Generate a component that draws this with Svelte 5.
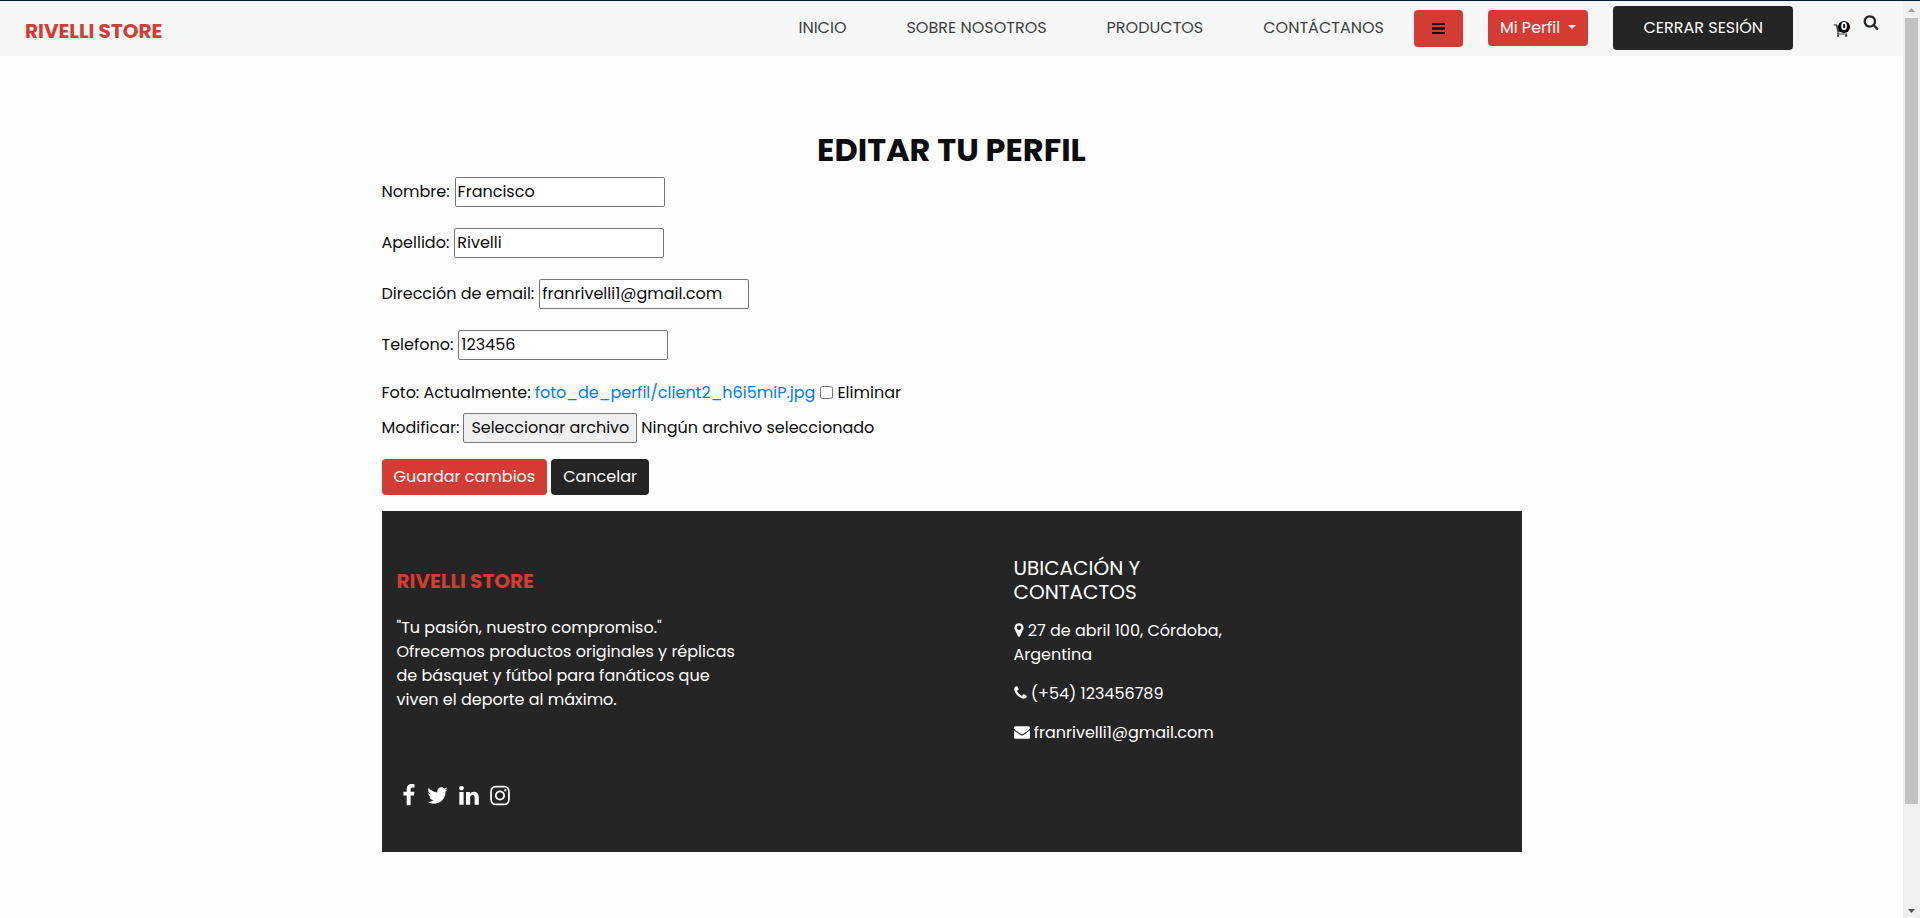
<script>
  const links = ['INICIO', 'SOBRE NOSOTROS', 'PRODUCTOS', 'CONTÁCTANOS'];

  let fields = $state([
    { id: 'nombre', label: 'Nombre:', type: 'text', value: 'Francisco' },
    { id: 'apellido', label: 'Apellido:', type: 'text', value: 'Rivelli' },
    { id: 'email', label: 'Dirección de email:', type: 'email', value: 'franrivelli1@gmail.com' },
    { id: 'telefono', label: 'Telefono:', type: 'text', value: '123456' }
  ]);

  const social = [
    {
      name: 'Facebook',
      box: '-100 0 1792 1792',
      path: 'M1343 12v264h-157q-86 0-116 36t-30 108v189h293l-39 296h-254v759h-306v-759h-255v-296h255v-218q0-186 104-288.500t277-102.500q147 0 228 12z'
    },
    {
      name: 'Twitter',
      box: '80 0 1792 1792',
      path: 'M1684 408q-67 98-162 167 1 14 1 42 0 130-38 259.500t-115.500 248.500-184.500 210.500-258 146-323 54.500q-271 0-496-145 35 4 78 4 225 0 401-138-105-2-188-64.500t-114-159.500q33 5 61 5 43 0 85-11-112-23-185.500-111.500t-73.500-205.500v-4q68 38 146 41-66-44-105-115t-39-154q0-88 44-163 121 149 294.500 238.500t371.500 99.500q-8-38-8-74 0-134 94.500-228.500t228.500-94.500q140 0 236 102 109-21 205-78-37 115-142 178 93-10 186-50z'
    },
    {
      name: 'LinkedIn',
      box: '40 0 1792 1792',
      path: 'M477 625v991h-330v-991h330zm21-306q1 73-50.500 122t-135.500 49h-2q-82 0-132-49t-50-122q0-74 51.500-122.500t134.500-48.500 133 48.500 51 122.500zm1166 729v568h-329v-530q0-105-40.500-164.500t-126.500-59.500q-63 0-105.500 34.500t-63.500 85.500q-11 30-11 81v553h-329q2-399 2-647t-1-296l-1-48h329v144h-2q20-32 41-56t56.500-52 87-43.500 114.500-15.500q171 0 275 113.500t104 332.500z'
    },
    {
      name: 'Instagram',
      box: '40 0 1792 1792',
      path: 'M1152 896q0-106-75-181t-181-75-181 75-75 181 75 181 181 75 181-75 75-181zm138 0q0 164-115 279t-279 115-279-115-115-279 115-279 279-115 279 115 115 279zm108-410q0 38-27 65t-65 27-65-27-27-65 27-65 65-27 65 27 27 65zm-502-220q-7 0-76.500-.5t-105.500 0-96.500 3-103 10-71.500 18.500q-50 20-88 58t-58 88q-11 29-18.500 71.500t-10 103-3 96.500 0 105.500.5 76.500-.5 76.500 0 105.500 3 96.500 10 103 18.500 71.500q20 50 58 88t88 58q29 11 71.500 18.500t103 10 96.500 3 105.500 0 76.500-.5 76.500.5 105.500 0 96.500-3 103-10 71.500-18.500q50-20 88-58t58-88q11-29 18.500-71.500t10-103 3-96.500 0-105.500-.5-76.500.5-76.500 0-105.500-3-96.500-10-103-18.500-71.500q-20-50-58-88t-88-58q-29-11-71.500-18.500t-103-10-96.500-3-105.500 0-76.500.5zm768 630q0 229-5 317-10 208-124 322t-322 124q-88 5-317 5t-317-5q-208-10-322-124t-124-322q-5-88-5-317t5-317q10-208 124-322t322-124q88-5 317-5t317 5q208 10 322 124t124 322q5 88 5 317z'
    }
  ];
</script>

<div class="window">
  <div class="page">
    <header>
      <a class="brand" href="#inicio">RIVELLI STORE</a>
      <nav>
        {#each links as link}
          <a class="nav-link" href="#{link}">{link}</a>
        {/each}
      </nav>
      <div class="actions">
        <button class="btn red menu" aria-label="Menú">
          <svg width="13" height="11" viewBox="0 0 13 11"><path d="M0 0h13v2H0zM0 4.300h13v2.400H0zM0 9h13v2H0z" /></svg>
        </button>
        <button class="btn red">Mi Perfil <span class="caret"></span></button>
        <button class="btn dark logout">CERRAR SESIÓN</button>
      </div>
      <div class="tools">
        <a class="cart" href="#carrito" aria-label="Carrito">
          <svg width="16" height="16" viewBox="0 0 1792 1792"><path d="M704 1536q0 52-38 90t-90 38-90-38-38-90 38-90 90-38 90 38 38 90zm896 0q0 52-38 90t-90 38-90-38-38-90 38-90 90-38 90 38 38 90zm128-1088v512q0 24-16.500 42.500t-40.500 21.500l-1044 122q13 60 13 70 0 16-24 64h920q26 0 45 19t19 45-19 45-45 19h-1024q-26 0-45-19t-19-45q0-11 8-31.500t16-36 21.500-40 15.500-29.500l-177-823h-204q-26 0-45-19t-19-45 19-45 45-19h256q16 0 28.500 6.500t19.500 15.500 13 24.500 8 26 5.500 29.500 4.500 26h1201q26 0 45 19t19 45z" /></svg>
          <span class="badge">0</span>
        </a>
        <button class="search" aria-label="Buscar">
          <svg width="16" height="16" viewBox="0 0 1792 1792"><path d="M1216 832q0-185-131.500-316.500t-316.500-131.500-316.500 131.500-131.500 316.500 131.500 316.500 316.500 131.500 316.500-131.500 131.500-316.500zm512 832q0 52-38 90t-90 38q-54 0-90-38l-343-342q-179 124-399 124-143 0-273.500-55.500t-225-150-150-225-55.500-273.500 55.500-273.500 150-225 225-150 273.500-55.500 273.500 55.500 225 150 150 225 55.500 273.500q0 220-124 399l343 343q37 37 37 90z" /></svg>
        </button>
      </div>
    </header>

    <main>
      <h1>EDITAR TU PERFIL</h1>
      <form onsubmit={(e) => e.preventDefault()}>
        {#each fields as field}
          <div class="field">
            <label for={field.id}>{field.label}</label>
            <input id={field.id} type={field.type} bind:value={field.value} />
          </div>
        {/each}
        <div class="row photo">
          <span>Foto: Actualmente:</span>
          <a href="#foto">foto_de_perfil/client2_h6i5miP.jpg</a>
          <input id="eliminar" type="checkbox" />
          <label for="eliminar">Eliminar</label>
        </div>
        <div class="row">
          <span>Modificar:</span>
          <input id="foto" class="hidden" type="file" />
          <label class="pick" for="foto">Seleccionar archivo</label>
          <span>Ningún archivo seleccionado</span>
        </div>
        <div class="row submit">
          <button class="btn red" type="submit">Guardar cambios</button>
          <a class="btn dark" href="#perfil">Cancelar</a>
        </div>
      </form>

      <footer>
        <section class="about">
          <a class="brand" href="#inicio">RIVELLI STORE</a>
          <p>"Tu pasión, nuestro compromiso."<br />Ofrecemos productos originales y réplicas<br />de básquet y fútbol para fanáticos que<br />viven el deporte al máximo.</p>
          <div class="social">
            {#each social as item}
              <a href="#{item.name}" aria-label={item.name}>
                <svg width="23" height="23" viewBox={item.box}><path d={item.path} /></svg>
              </a>
            {/each}
          </div>
        </section>
        <section class="contact">
          <h2>UBICACIÓN Y<br />CONTACTOS</h2>
          <p>
            <svg width="10" height="16" viewBox="384 0 1024 1792"><path d="M1152 640q0-106-75-181t-181-75-181 75-75 181 75 181 181 75 181-75 75-181zm256 0q0 109-33 179l-364 774q-16 33-47.500 52t-67.500 19-67.500-19-46.500-52l-365-774q-33-70-33-179 0-212 150-362t362-150 362 150 150 362z" /></svg>
            27 de abril 100, Córdoba,<br />Argentina
          </p>
          <p>
            <svg width="13" height="16" viewBox="192 0 1408 1792"><path d="M1600 1240q0 27-10 70.500t-21 68.500q-21 50-122 106-94 51-186 51-27 0-53-3.500t-57.500-12.500-47-14.500-55.500-20.500-49-18q-98-35-175-83-127-79-264-216t-216-264q-48-77-83-175-3-9-18-49t-20.500-55.500-14.500-47-12.500-57.500-3.500-53q0-92 51-186 56-101 106-122 25-11 68.500-21t70.500-10q14 0 21 3 18 6 53 76 11 19 30 54t35 63.500 31 53.500q3 4 17.500 25t21.500 35.500 7 28.500q0 20-28.500 50t-62 55-62 53-28.500 46q0 9 5 22.500t8.500 20.500 14 24 11.500 19q76 137 174 235t235 174q2 1 19 11.500t24 14 20.500 8.500 22.500 5q18 0 46-28.500t53-62 55-62 50-28.500q14 0 28.500 7t35.500 21.500 25 17.500q25 15 53.500 31t63.500 35 54 30q70 35 76 53 3 7 3 21z" /></svg>
            (+54) 123456789
          </p>
          <p>
            <svg width="16" height="16" viewBox="0 0 1792 1792"><path d="M1792 710v794q0 66-47 113t-113 47h-1472q-66 0-113-47t-47-113v-794q44 49 101 87 362 246 497 345 57 42 92.500 65.500t94.500 48 110 24.500h2q51 0 110-24.500t94.500-48 92.500-65.500q170-123 498-345 57-39 100-87zm0-294q0 79-49 151t-122 123q-376 261-468 325-10 7-42.500 31t-54 38.500-52 32.500-57.500 27-50 9h-2q-23 0-50-9t-57.500-27-52-32.500-54-38.500-42.500-31q-91-64-262-182.500t-205-142.500q-62-42-117-115.500t-55-136.500q0-78 41.500-130t118.500-52h1472q65 0 112.500 47t47.500 113z" /></svg>
            franrivelli1@gmail.com
          </p>
        </section>
      </footer>
    </main>
  </div>
  <div class="scrollbar" aria-hidden="true">
    <svg width="17" height="17" viewBox="0 0 17 17"><path fill="#a3a3a3" d="M5 11h7L8.500 7z" /></svg>
    <div class="track"><div class="thumb"></div></div>
    <svg width="17" height="17" viewBox="0 0 17 17"><path fill="#505050" d="M5 8h7l-3.500 4z" /></svg>
  </div>
</div>

<style>
  :global(body) {
    margin: 0;
    background: #fefefe;
  }
  .window {
    display: grid;
    grid-template-columns: minmax(0, 1fr) 17px;
    min-height: 100vh;
    box-sizing: border-box;
    border-top: 1px solid #051c33;
    font: 16px/24px Poppins, Inter, sans-serif;
    color: #0c0c0c;
  }
  a {
    color: inherit;
    text-decoration: none;
  }
  svg {
    fill: currentColor;
  }
  button,
  input {
    font: inherit;
    color: inherit;
  }
  header {
    display: flex;
    height: 55px;
    background: #f5f7f7;
  }
  .brand {
    font-size: 20px;
    font-weight: 700;
    color: #d43c33;
  }
  header .brand {
    margin: 18px auto 0 25px;
  }
  nav {
    display: flex;
    padding-top: 15px;
  }
  .nav-link {
    padding: 0 30px;
    color: #403f3f;
  }
  .actions {
    display: flex;
    align-items: flex-start;
    gap: 25px;
    padding-top: 9px;
  }
  .btn {
    display: inline-block;
    box-sizing: border-box;
    height: 36px;
    padding: 6px 12px;
    border: 0;
    border-radius: 4px;
    color: #fff;
    cursor: pointer;
  }
  .red {
    background: #d43c33;
  }
  .dark {
    background: #252525;
  }
  .menu {
    width: 49px;
    height: 37px;
    color: #0c0c0c;
  }
  .menu svg {
    display: block;
    margin: 0 auto;
  }
  .caret {
    display: inline-block;
    margin-left: 4px;
    vertical-align: 4px;
    border: 4px solid transparent;
    border-top-color: #fff;
    border-bottom: 0;
  }
  .logout {
    height: 44px;
    margin-top: -4px;
    padding: 0 30px;
  }
  .tools {
    display: flex;
    align-items: flex-start;
    gap: 14px;
    padding: 13px 24px 0 40px;
  }
  .cart {
    position: relative;
    display: flex;
    padding-top: 8px;
    color: #403f3f;
  }
  .badge {
    position: absolute;
    top: 7px;
    left: 5px;
    width: 12px;
    height: 12px;
    border-radius: 50%;
    background: #000;
    color: #fff;
    font-size: 10px;
    font-weight: 700;
    line-height: 12px;
    text-align: center;
  }
  .search {
    display: flex;
    padding: 0;
    border: 0;
    background: none;
    color: #212529;
  }
  main {
    max-width: 1140px;
    margin: 0 auto;
    padding-top: 75px;
  }
  h1 {
    margin: 0 0 8px;
    font-size: 32px;
    line-height: 38px;
    font-weight: 700;
    text-align: center;
  }
  .field {
    display: flex;
    align-items: center;
    gap: 5px;
    margin-bottom: 21px;
  }
  .field input {
    box-sizing: border-box;
    width: 210px;
    height: 30px;
    padding: 0 2px 1px;
    border: 1px solid #767676;
    border-radius: 2px;
    background: #fff;
  }
  .row {
    display: flex;
    align-items: center;
    gap: 4px;
  }
  .photo {
    margin-bottom: 8px;
  }
  .photo a {
    color: #007bff;
  }
  .photo input {
    width: 13px;
    height: 13px;
    margin: 0 0 2px 1px;
  }
  .hidden {
    position: absolute;
    width: 1px;
    height: 1px;
    overflow: hidden;
    opacity: 0;
  }
  .pick {
    padding: 2px 7px;
    border: 1px solid #767676;
    border-radius: 2px;
    background: #efefef;
  }
  .submit {
    margin: 16px 0;
  }
  footer {
    display: grid;
    grid-template-columns: 617px 1fr;
    box-sizing: border-box;
    padding: 45px 15px;
    background: #252525;
    color: #fff;
  }
  .about .brand {
    display: block;
    margin: 13px 0 23px;
  }
  footer p {
    margin: 0 0 15px;
  }
  .social {
    display: flex;
    gap: 8px;
    margin: 72px 0 0 -1px;
  }
  .social svg {
    display: block;
  }
  .contact h2 {
    margin: 0 0 15px;
    font-size: 20px;
    line-height: 24px;
    font-weight: 400;
  }
  .contact svg {
    vertical-align: -2px;
  }
  .scrollbar {
    display: flex;
    flex-direction: column;
    background: #f0f0f0;
  }
  .scrollbar svg {
    display: block;
  }
  .track {
    flex: 1;
    padding: 0 2px;
  }
  .thumb {
    height: 89%;
    background: #c1c1c1;
  }
</style>
